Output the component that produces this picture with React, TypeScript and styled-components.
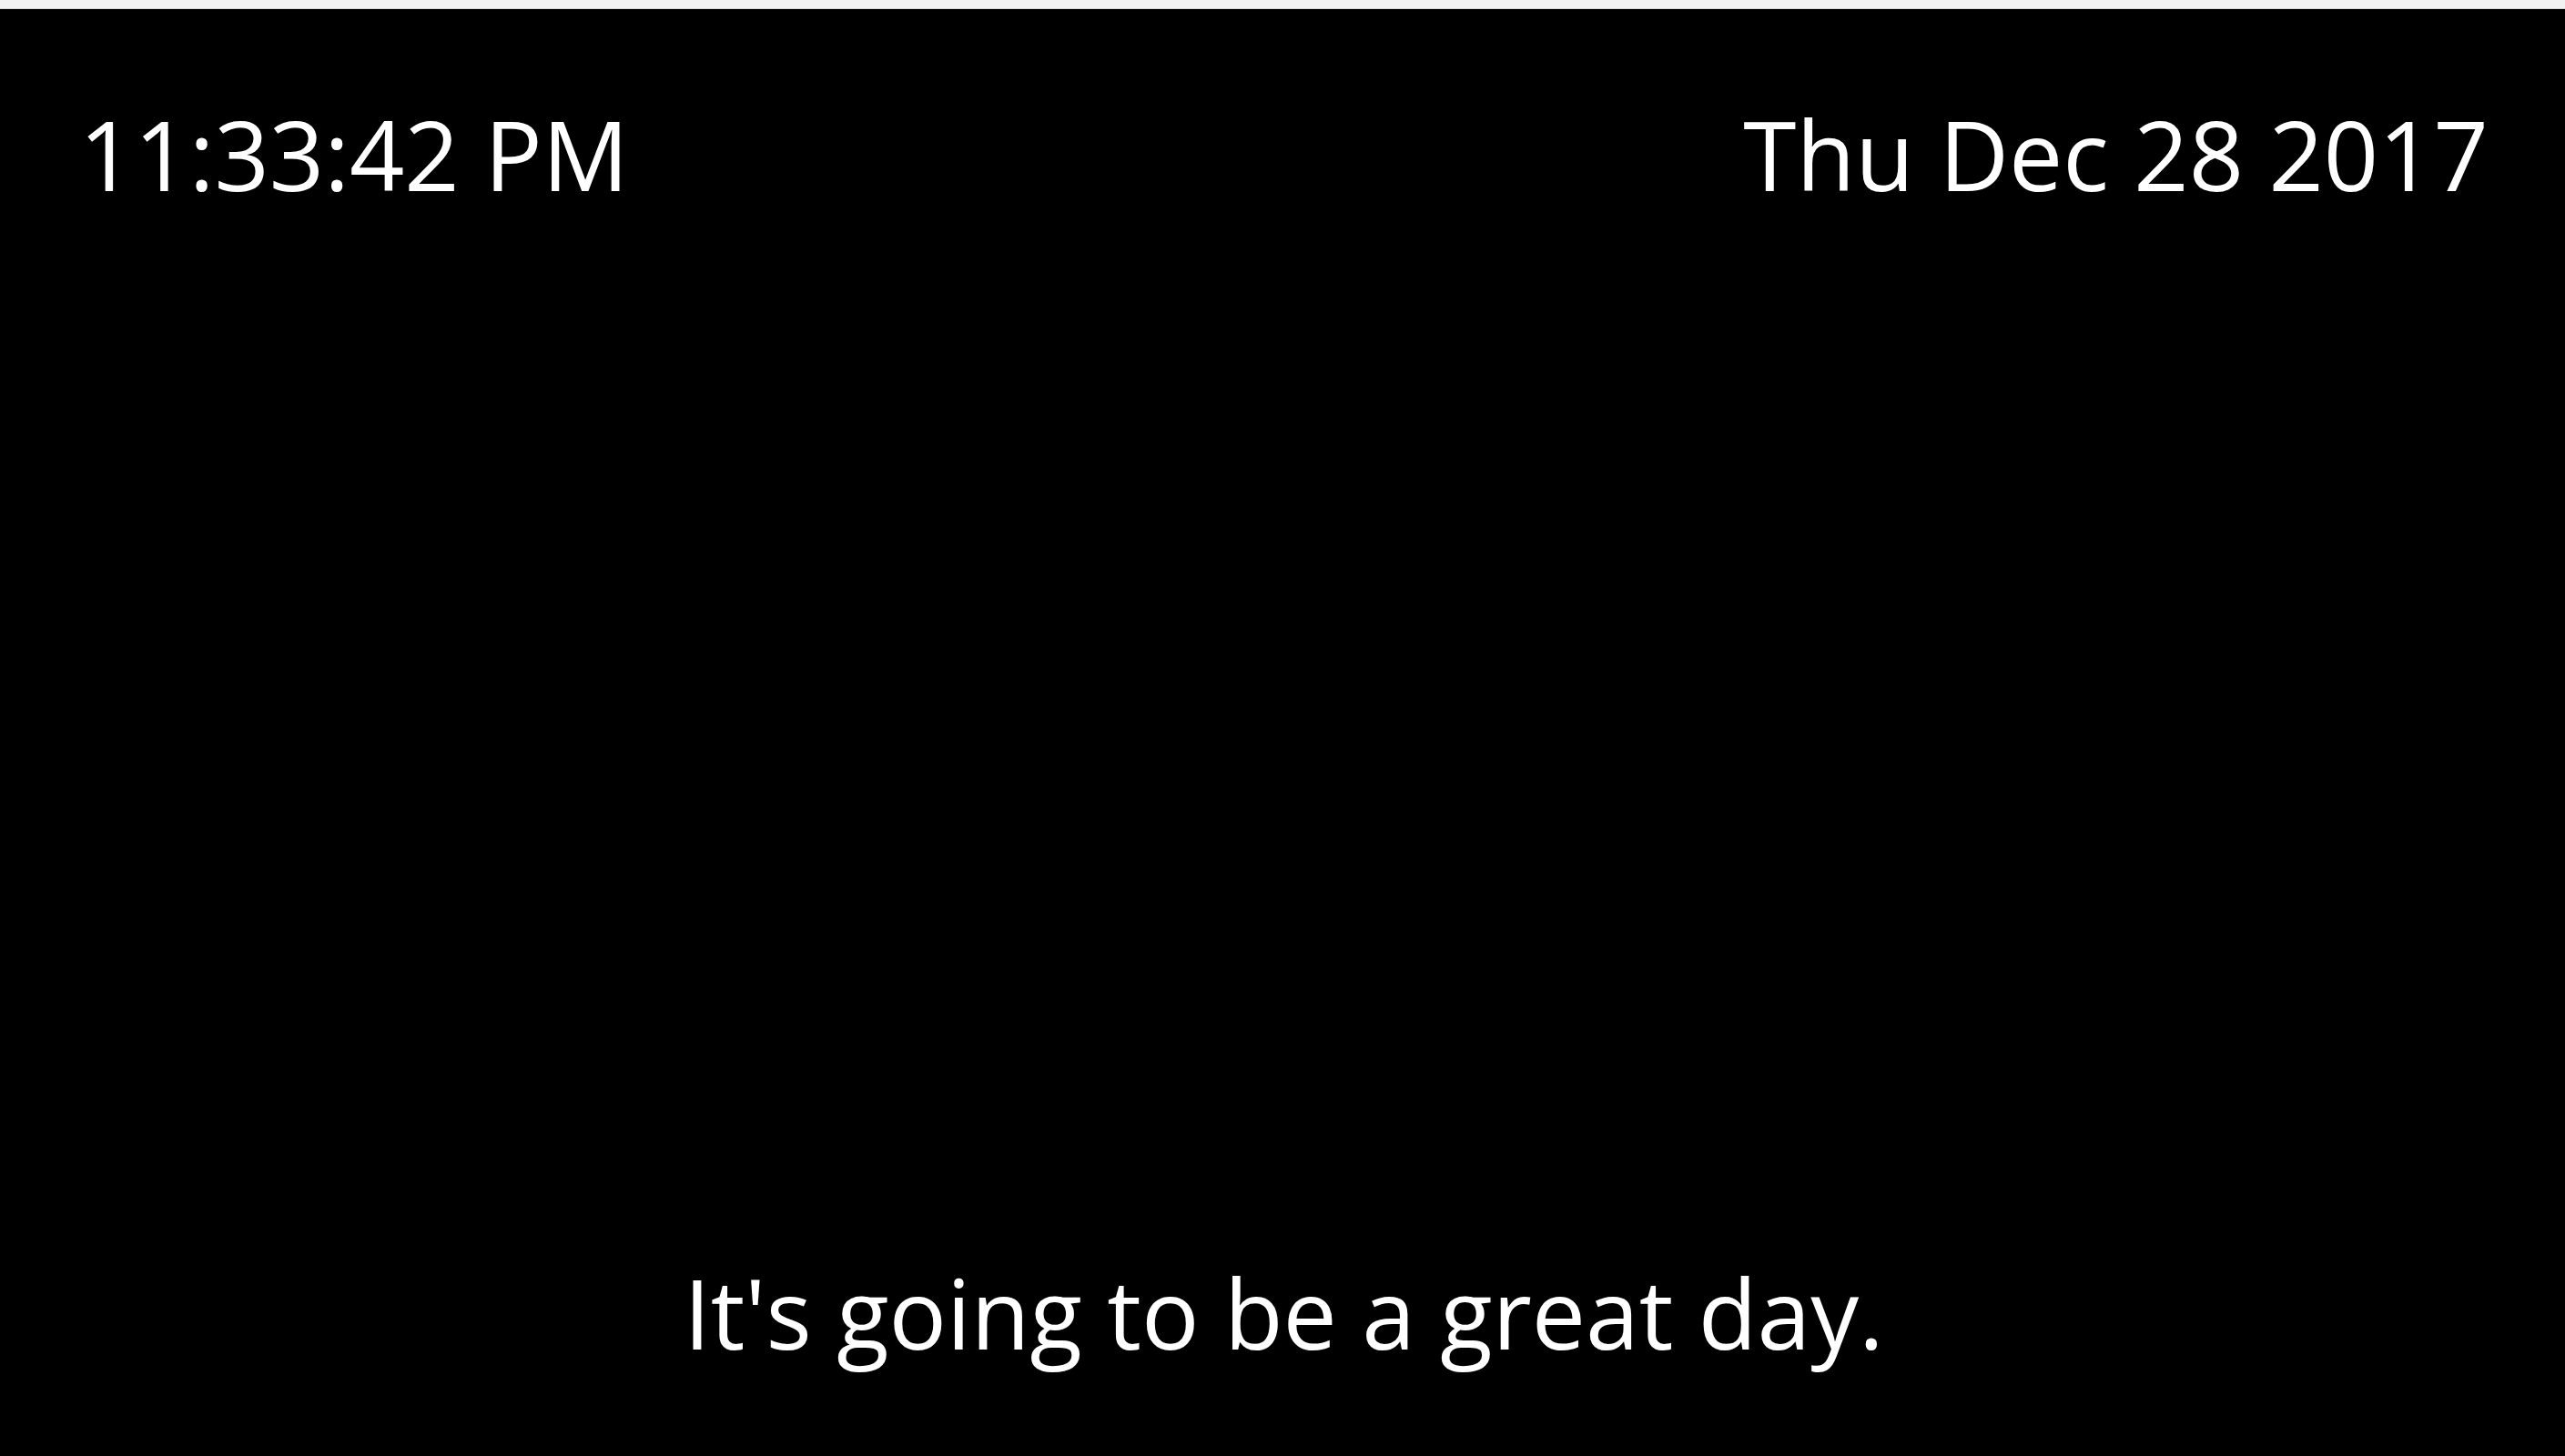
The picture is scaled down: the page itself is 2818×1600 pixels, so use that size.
import React from "react";
import styled, { createGlobalStyle } from "styled-components";

const GlobalStyle = createGlobalStyle`
  html, body {
    margin: 0;
    padding: 0;
    height: 100%;
    background: #000;
  }
  #root {
    height: 100%;
  }
`;

const Page = styled.div`
  display: flex;
  flex-direction: column;
  height: 100vh;
  font-family: "Open Sans", "Noto Sans", sans-serif;
  color: #fff;
`;

const TopStrip = styled.div`
  height: 9px;
  background: #f1f1f1;
  border-bottom: 1px solid #d8d8d8;
  flex: none;
`;

const Screen = styled.main`
  flex: 1;
  background: #000;
  display: flex;
  flex-direction: column;
  justify-content: space-between;
  padding: 87px 84px 86px 87px;
  box-sizing: border-box;
`;

const Header = styled.header`
  display: flex;
  justify-content: space-between;
  align-items: baseline;
`;

const BigText = styled.div`
  font-size: 105.6px;
  line-height: normal;
  font-weight: 400;
  white-space: nowrap;
`;

const Quote = styled(BigText)`
  text-align: center;
`;

export default function App() {
  return (
    <>
      <GlobalStyle />
      <Page>
        <TopStrip />
        <Screen>
          <Header>
            <BigText>11:33:42 PM</BigText>
            <BigText>Thu Dec 28 2017</BigText>
          </Header>
          <Quote>It's going to be a great day.</Quote>
        </Screen>
      </Page>
    </>
  );
}
